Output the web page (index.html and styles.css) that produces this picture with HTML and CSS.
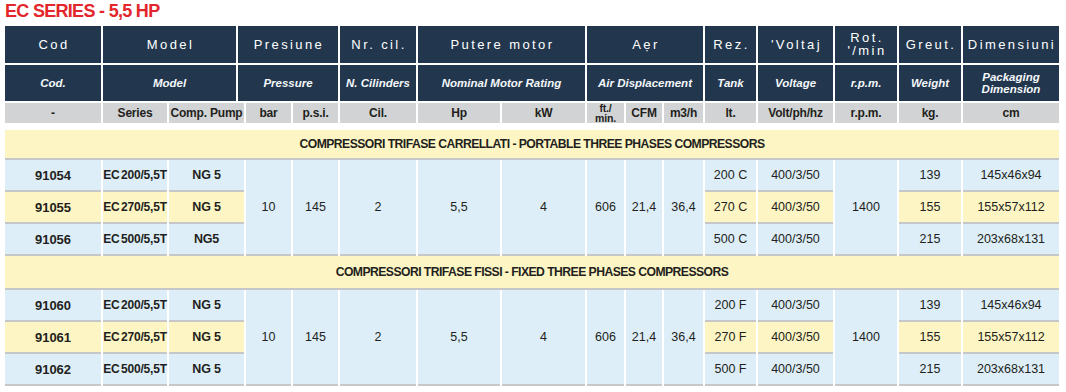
FILE: index.html
```html
<!DOCTYPE html>
<html lang="it">
<head>
<meta charset="utf-8">
<title>EC SERIES - 5,5 HP</title>
<link rel="stylesheet" href="styles.css">
</head>
<body>
<div class="page">
  <h1 class="title">EC SERIES - 5,5 HP</h1>
  <div class="spec">
    <!-- header row 1 -->
    <div class="h1">Cod</div>
    <div class="h1 s2">Model</div>
    <div class="h1 s3">Presiune</div>
    <div class="h1">Nr. cil.</div>
    <div class="h1 s2">Putere motor</div>
    <div class="h1 s3">Aẹr</div>
    <div class="h1">Rez.</div>
    <div class="h1">'Voltaj</div>
    <div class="h1 two">Rot.<br>'/min</div>
    <div class="h1">Greut.</div>
    <div class="h1">Dimensiuni</div>
    <!-- header row 2 -->
    <div class="h2">Cod.</div>
    <div class="h2 s2">Model</div>
    <div class="h2 s3">Pressure</div>
    <div class="h2">N. Cilinders</div>
    <div class="h2 s2">Nominal Motor Rating</div>
    <div class="h2 s3">Air Displacement</div>
    <div class="h2">Tank</div>
    <div class="h2">Voltage</div>
    <div class="h2">r.p.m.</div>
    <div class="h2">Weight</div>
    <div class="h2 two">Packaging<br>Dimension</div>
    <!-- header row 3 -->
    <div class="h3">-</div>
    <div class="h3">Series</div>
    <div class="h3 s2">Comp. Pump</div>
    <div class="h3">bar</div>
    <div class="h3">p.s.i.</div>
    <div class="h3">Cil.</div>
    <div class="h3">Hp</div>
    <div class="h3">kW</div>
    <div class="h3 tiny"><span>ft./<br>min.</span></div>
    <div class="h3">CFM</div>
    <div class="h3">m3/h</div>
    <div class="h3">lt.</div>
    <div class="h3">Volt/ph/hz</div>
    <div class="h3">r.p.m.</div>
    <div class="h3">kg.</div>
    <div class="h3">cm</div>

    <!-- section 1 -->
    <div class="sec first">COMPRESSORI TRIFASE CARRELLATI - PORTABLE THREE PHASES COMPRESSORS</div>
    <div class="c b id">91054</div>
    <div class="c b ser">EC 200/5,5T</div>
    <div class="c b s2">NG 5</div>
    <div class="c m">10</div>
    <div class="c m">145</div>
    <div class="c m">2</div>
    <div class="c m">5,5</div>
    <div class="c m">4</div>
    <div class="c m">606</div>
    <div class="c m">21,4</div>
    <div class="c m">36,4</div>
    <div class="c">200 C</div>
    <div class="c">400/3/50</div>
    <div class="c m">1400</div>
    <div class="c">139</div>
    <div class="c">145x46x94</div>

    <div class="c b id y">91055</div>
    <div class="c b ser y">EC 270/5,5T</div>
    <div class="c b y s2">NG 5</div>
    <div class="c y">270 C</div>
    <div class="c y">400/3/50</div>
    <div class="c y">155</div>
    <div class="c y">155x57x112</div>

    <div class="c b id">91056</div>
    <div class="c b ser">EC 500/5,5T</div>
    <div class="c b s2">NG5</div>
    <div class="c">500 C</div>
    <div class="c">400/3/50</div>
    <div class="c">215</div>
    <div class="c">203x68x131</div>

    <!-- section 2 -->
    <div class="sec second">COMPRESSORI TRIFASE FISSI - FIXED THREE PHASES COMPRESSORS</div>
    <div class="c b id">91060</div>
    <div class="c b ser">EC 200/5,5T</div>
    <div class="c b s2">NG 5</div>
    <div class="c m">10</div>
    <div class="c m">145</div>
    <div class="c m">2</div>
    <div class="c m">5,5</div>
    <div class="c m">4</div>
    <div class="c m">606</div>
    <div class="c m">21,4</div>
    <div class="c m">36,4</div>
    <div class="c">200 F</div>
    <div class="c">400/3/50</div>
    <div class="c m">1400</div>
    <div class="c">139</div>
    <div class="c">145x46x94</div>

    <div class="c b id y">91061</div>
    <div class="c b ser y">EC 270/5,5T</div>
    <div class="c b y s2">NG 5</div>
    <div class="c y">270 F</div>
    <div class="c y">400/3/50</div>
    <div class="c y">155</div>
    <div class="c y">155x57x112</div>

    <div class="c b id">91062</div>
    <div class="c b ser">EC 500/5,5T</div>
    <div class="c b s2">NG 5</div>
    <div class="c">500 F</div>
    <div class="c">400/3/50</div>
    <div class="c">215</div>
    <div class="c">203x68x131</div>
  </div>
</div>
</body>
</html>
```
FILE: styles.css
```css
* { box-sizing: border-box; }

body {
  margin: 0;
  background: #ffffff;
  font-family: "Liberation Sans", Arial, sans-serif;
  color: #231f20;
}

.page {
  padding: 1px 0 0 5px;
}

.title {
  margin: 0;
  height: 25px;
  font: bold 18px/21px "Liberation Sans", Arial, sans-serif;
  letter-spacing: -0.7px;
  color: #e3262b;
}

.spec {
  display: grid;
  width: 1054px;
  grid-template-columns: 96px 64px 67px 6px 45px 45px 76px 82px 83px 37px 36px 39px 51px 75px 62px 62px 96px;
  column-gap: 2px;
}

.s2 { grid-column: span 2; }
.s3 { grid-column: span 3; }

.h1, .h2, .h3, .c, .sec {
  display: flex;
  align-items: center;
  justify-content: center;
  text-align: center;
  white-space: nowrap;
}

.h1 {
  height: 37px;
  margin-bottom: 2px;
  background: #22374d;
  color: #ffffff;
  font-size: 13px;
  letter-spacing: 2.4px;
  padding-left: 2px;
}

.h1.two {
  line-height: 13px;
  padding-bottom: 2px;
}

.h2 {
  height: 36px;
  margin-bottom: 2px;
  background: #22374d;
  color: #f4f7fb;
  font-size: 11.5px;
  font-weight: bold;
  font-style: italic;
}

.h2.two {
  line-height: 12px;
}

.h3 {
  height: 20px;
  margin-bottom: 7px;
  background: #d1d3d4;
  font-size: 12px;
  font-weight: bold;
  letter-spacing: -0.2px;
}

.h3.tiny {
  overflow: hidden;
  font-size: 10.5px;
  line-height: 10px;
}

.sec {
  grid-column: 1 / -1;
  background: #fdf5c3;
  border-bottom: 2px solid #c6c7c9;
  font-size: 12.2px;
  font-weight: bold;
  letter-spacing: -0.55px;
}

.sec.first { height: 30px; }
.sec.second { height: 34px; }

.c {
  height: 32px;
  background: #ddeef8;
  border-bottom: 2px solid #c6c7c9;
  font-size: 12.5px;
}

.c.b {
  font-size: 12.5px;
  font-weight: bold;
  letter-spacing: -0.2px;
}

.c.id {
  font-size: 13px;
  letter-spacing: 0;
}

.c.ser {
  font-size: 12px;
  word-spacing: -1.5px;
}

.c.y { background: #fdf5c3; }

.c.m {
  grid-row: span 3;
  height: auto;
}
```
